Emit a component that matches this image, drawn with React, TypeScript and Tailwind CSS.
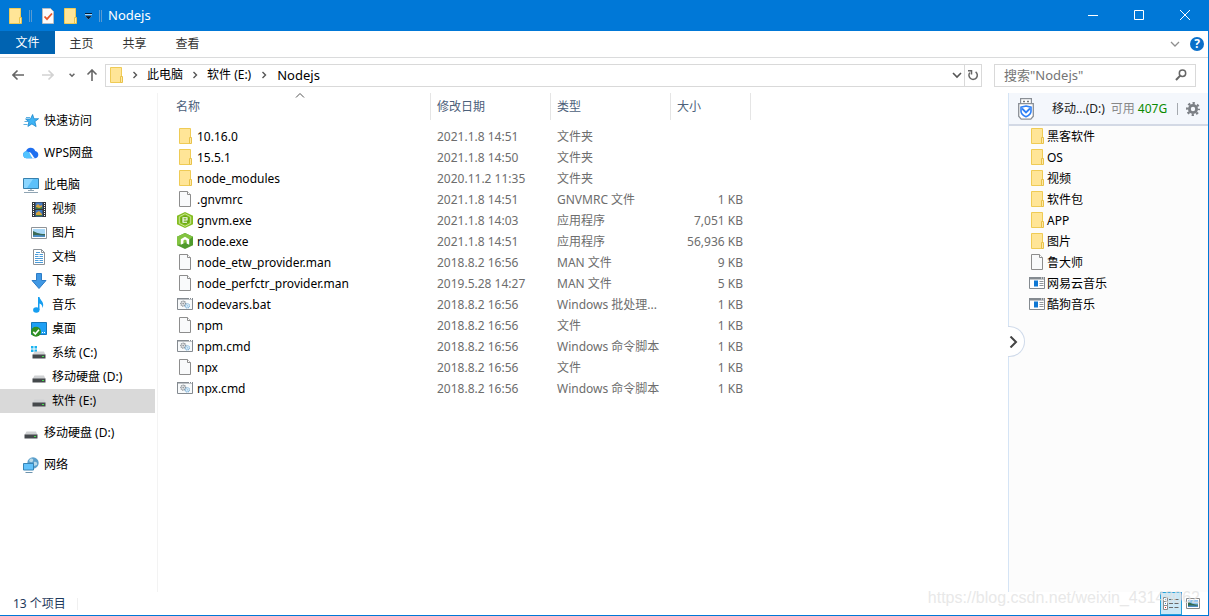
import type { ReactNode } from "react";

type IconName =
  | "folder" | "file" | "script" | "gnvm" | "node" | "app" | "star" | "cloud" | "pc" | "video"
  | "picture" | "doc" | "download" | "music" | "desktop" | "system" | "drive" | "network";

const drawings: Record<IconName, ReactNode> = {
  folder: (
    <>
      <path d="M2.5.5h11v15h-11z" fill="#ffe597" stroke="#efcb55" />
      <path d="M12.5 9.5h2v6h-2z" fill="#ffe9a6" stroke="#e8c24a" />
    </>
  ),
  file: (
    <>
      <path d="M2.5.5h8l3 3v12h-11z" fill="#f9fafb" stroke="#8d8d8d" />
      <path d="M10.5.5v3h3" fill="#fff" stroke="#8d8d8d" />
    </>
  ),
  script: (
    <>
      <path d="M.5 2.500h15v11H.5z" fill="#f8fafb" stroke="#848a90" />
      <path d="M0 2h16v1.500H0z" fill="#848a90" />
      <path d="M12 2.500h1M14 2.500h1" stroke="#fff" />
      <circle cx="6.200" cy="7.600" r="2.400" fill="#e4e6e8" stroke="#8b9096" strokeWidth="1.300" strokeDasharray="1.100 .5" />
      <circle cx="6.200" cy="7.600" r=".8" fill="#8b9096" />
      <circle cx="10.300" cy="9.800" r="2.100" fill="#e3f2fb" stroke="#7fb2d8" strokeWidth="1.200" strokeDasharray="1 .5" />
      <circle cx="10.300" cy="9.800" r=".6" fill="#6aa5d0" />
    </>
  ),
  gnvm: (
    <>
      <path d="M8 0l8 3.800v8.400L8 16 0 12.200V3.800z" fill="#84bd22" />
      <path d="M8 1.800l5.700 3v6.500L8 14.300l-5.700-3V4.800z" fill="none" stroke="#d9efb0" strokeWidth=".8" />
      <path d="M8 3.600l4.200 2.200v4.400L8 12.400l-4.200-2.200V5.800z" fill="#69a814" />
      <path d="M6 8h4V5.800H6v4.400h4" fill="none" stroke="#fff" strokeWidth="1.100" />
    </>
  ),
  node: (
    <>
      <path d="M8 0l8 3.800v8.400L8 16 0 12.200V3.800z" fill="#4f9a2c" />
      <path d="M8 0l8 3.800L8 10 0 12.200V3.800z" fill="#83c341" />
      <path d="M3.800 11.800V6.200L8 3.800l4.200 2.400v5.600l-2.600-1.300V7.400L8 6.500l-1.600.9v3.100z" fill="#fff" />
    </>
  ),
  app: (
    <>
      <path d="M.5 2.500h15v11H.5z" fill="#fff" stroke="#848a90" />
      <path d="M0 2h16v2.500H0z" fill="#848a90" />
      <path d="M12 3h1M14 3h1" stroke="#fff" />
      <path d="M5 5.500h4v6H5z" fill="#0f78d4" />
      <path d="M10.500 6.500h4M10.500 8.500h4M10.500 10.500h4" stroke="#8f959a" />
    </>
  ),
  star: (
    <>
      <path d="M9.600 1.500l1.400 4.300 4.600-.1-3.700 2.900 1.200 5-4.200-2.700-4 2.500 1-4.700L2.600 6h4.900z" fill="#3fb4f5" stroke="#1b86cc" strokeWidth=".8" />
      <path d="M3 4.500h4M1.500 8.500h3.500M.5 11.500h4" stroke="#4ba6dc" strokeWidth=".9" />
    </>
  ),
  cloud: (
    <>
      <path d="M3.600 13.300A3.600 3.600 0 0 1 3 6.200a4.900 4.900 0 0 1 9.200-.3 3.800 3.800 0 0 1 .3 7.400z" fill="#1e6ff0" />
      <path d="M3.600 13.300A3.600 3.600 0 0 1 3 6.200C6 6 7.500 9 9 13.300z" fill="#52c4ff" />
      <path d="M5.800 7c3 0 4 5.300 6.500 6.300H9.600C8 12 7.500 9 5.800 7z" fill="#fff" />
    </>
  ),
  pc: (
    <>
      <path d="M.5 1.500h15v10H.5z" fill="#5cc0fa" stroke="#3780ad" />
      <path d="M1 2h9L4 11H1z" fill="#8bd6ff" />
      <path d="M5 13.500h6M1 15.500h14" stroke="#8fa4b3" />
      <path d="M7 12h2v1H7z" fill="#b5c3cd" />
    </>
  ),
  video: (
    <>
      <path d="M1 1h14v15H1z" fill="#33373b" />
      <path d="M4.500 1.500h7v6.500h-7z" fill="#497ec7" />
      <path d="M4.500 9h7v6.500h-7z" fill="#3f78bf" />
      <path d="M5 5l2-2 2 2 2-1v3H5zM5 12l3-2 3 3v1H5z" fill="#d9a53d" />
      <path d="M5 6l3 1 3-1v2H5zM5 14h6v1H5z" fill="#3b7a45" />
      <path d="M2.500 2v13M13.500 2v13" stroke="#fff" strokeDasharray="1 1" />
    </>
  ),
  picture: (
    <>
      <path d="M.5 2.500h15v11H.5z" fill="#fff" stroke="#8f9499" />
      <path d="M2 4h12v8H2z" fill="#a9d8f7" />
      <path d="M2 6c3 1 5 3 12 3v3H2z" fill="#3c6b58" />
      <path d="M2 10.500c4-1 8 0 12 0V12H2z" fill="#4d8ec6" />
    </>
  ),
  doc: (
    <>
      <path d="M2.500.5h8l3 3v12h-11z" fill="#fff" stroke="#8d9297" />
      <path d="M10.500.5v3h3" fill="none" stroke="#8d9297" />
      <path d="M4 5.500h3.500M8.500 5.500H12M4 7.500h3.500M8.500 7.500H12M4 9.500h8M4 11.500h3.500M8.500 11.500H12M4 13.500h8M5 3.500h4" stroke="#4b9bd8" />
    </>
  ),
  download: <path d="M5.500.5h5v7h4.500L8 15.500 1 7.500h4.500z" fill="#4098e4" stroke="#2c7cc7" />,
  music: (
    <>
      <path d="M7 0h1.500c.5 3.500 5.500 5 3 11-.2-3-1.500-4-3-4.500V13H7z" fill="#169ef0" />
      <ellipse cx="5.300" cy="13" rx="3.200" ry="2.700" fill="#169ef0" />
    </>
  ),
  desktop: (
    <>
      <path d="M.5 1.500h15v12H.5z" fill="#1ea0f5" stroke="#1576b9" />
      <path d="M11 11.500h1M13 11.500h1" stroke="#fff" />
      <circle cx="5" cy="10.800" r="5" fill="#2f8f22" />
      <path d="M2.300 10.900l2 2.100 3.700-4.200" fill="none" stroke="#fff" strokeWidth="1.600" />
    </>
  ),
  system: (
    <>
      <path d="M0 1h2.500v2.500H0zM3.500 1H6v2.500H3.500zM0 4.500h2.500V7H0zM3.500 4.500H6V7H3.500z" fill="#1bb3f0" />
      <path d="M3.500 6.500h9.500l1.500 3.500h-13z" fill="#d3d5d7" />
      <path d="M1.500 9.500h13v4h-13z" fill="#45494c" />
      <path d="M11 11.500h2" stroke="#43e04b" />
    </>
  ),
  drive: (
    <>
      <path d="M3.500 6.500h9.500l1.500 3.500h-13z" fill="#cfd1d3" />
      <path d="M1.500 9.500h13v4h-13z" fill="#45494c" />
      <path d="M11 11.500h2" stroke="#43e04b" />
    </>
  ),
  network: (
    <>
      <circle cx="10" cy="6" r="5.700" fill="#5b9fcb" />
      <path d="M7 2c2-1 4 0 3 2S7 5 6 4zM11 5c2-1 4 1 3 3l-3 1z" fill="#b9d9e8" />
      <path d="M.5 6.500h10v6.500H.5z" fill="#62c2fb" stroke="#3884b4" />
      <path d="M2.500 15.500h7" stroke="#6d93ad" />
    </>
  ),
};

function Icon({ name }: { name: IconName }) {
  return (
    <svg className="size-4 shrink-0" viewBox="0 0 16 16" aria-hidden="true">
      {drawings[name]}
    </svg>
  );
}

function Chevron({ d, className }: { d: string; className: string }) {
  return (
    <svg className={className} viewBox="0 0 10 10" fill="none" stroke="currentColor" aria-hidden="true">
      <path d={d} />
    </svg>
  );
}

const DOWN = "M1 3l4 4 4-4";
const RIGHT = "M3.500 2l3 3-3 3";

const places: { label: string; icon: IconName; children?: { label: string; icon: IconName }[] }[] = [
  { label: "快速访问", icon: "star" },
  { label: "WPS网盘", icon: "cloud" },
  {
    label: "此电脑",
    icon: "pc",
    children: [
      { label: "视频", icon: "video" },
      { label: "图片", icon: "picture" },
      { label: "文档", icon: "doc" },
      { label: "下载", icon: "download" },
      { label: "音乐", icon: "music" },
      { label: "桌面", icon: "desktop" },
      { label: "系统 (C:)", icon: "system" },
      { label: "移动硬盘 (D:)", icon: "drive" },
      { label: "软件 (E:)", icon: "drive" },
    ],
  },
  { label: "移动硬盘 (D:)", icon: "drive" },
  { label: "网络", icon: "network" },
];

const files: [IconName, string, string, string, string][] = [
  ["folder", "10.16.0", "2021.1.8 14:51", "文件夹", ""],
  ["folder", "15.5.1", "2021.1.8 14:50", "文件夹", ""],
  ["folder", "node_modules", "2020.11.2 11:35", "文件夹", ""],
  ["file", ".gnvmrc", "2021.1.8 14:51", "GNVMRC 文件", "1 KB"],
  ["gnvm", "gnvm.exe", "2021.1.8 14:03", "应用程序", "7,051 KB"],
  ["node", "node.exe", "2021.1.8 14:51", "应用程序", "56,936 KB"],
  ["file", "node_etw_provider.man", "2018.8.2 16:56", "MAN 文件", "9 KB"],
  ["file", "node_perfctr_provider.man", "2019.5.28 14:27", "MAN 文件", "5 KB"],
  ["script", "nodevars.bat", "2018.8.2 16:56", "Windows 批处理...", "1 KB"],
  ["file", "npm", "2018.8.2 16:56", "文件", "1 KB"],
  ["script", "npm.cmd", "2018.8.2 16:56", "Windows 命令脚本", "1 KB"],
  ["file", "npx", "2018.8.2 16:56", "文件", "1 KB"],
  ["script", "npx.cmd", "2018.8.2 16:56", "Windows 命令脚本", "1 KB"],
];

const usbItems: [IconName, string][] = [
  ["folder", "黑客软件"],
  ["folder", "OS"],
  ["folder", "视频"],
  ["folder", "软件包"],
  ["folder", "APP"],
  ["folder", "图片"],
  ["file", "鲁大师"],
  ["app", "网易云音乐"],
  ["app", "酷狗音乐"],
];

function TitleBar() {
  return (
    <header className="flex h-[31px] shrink-0 items-center bg-[#0078d7] pl-[7px] text-white">
      <Icon name="folder" />
      <span className="ml-[6px] h-3 w-[3px] border-x border-[#5b9bd0]" />
      <button aria-label="属性" className="ml-2">
        <svg className="size-4" viewBox="0 0 16 16" aria-hidden="true">
          <path d="M2.500.5h8l3 3v12h-11z" fill="#fbfbfb" stroke="#b9bcc0" />
          <path d="M4.500 8.500l2.500 2.700 5-5.700" fill="none" stroke="#e8562a" strokeWidth="1.800" />
        </svg>
      </button>
      <button aria-label="新建文件夹" className="ml-[6px]">
        <Icon name="folder" />
      </button>
      <button aria-label="自定义快速访问工具栏" className="ml-[6px]">
        <svg className="h-2 w-[9px]" viewBox="0 0 9 8" aria-hidden="true">
          <path d="M1 1.500h7" stroke="#001a33" />
          <path d="M1 2.500h7" stroke="#fff" strokeOpacity=".7" />
          <path d="M1 4h7L4.500 7.500z" fill="#001a33" stroke="#fff" strokeOpacity=".4" strokeWidth=".5" />
        </svg>
      </button>
      <span className="ml-[6px] h-3 w-[3px] border-x border-[#5b9bd0]" />
      <h1 className="ml-[6px] pb-px text-[13px]">Nodejs</h1>
      <div className="ml-auto flex self-stretch">
        {[
          ["最小化", "M0 5.500h10"],
          ["最大化", "M.5.5h9v9h-9z"],
          ["关闭", "M0 0l10 10M10 0L0 10"],
        ].map(([label, d]) => (
          <button key={label} aria-label={label} className="flex w-[46px] items-center justify-center pb-px">
            <svg className="size-[10px]" viewBox="0 0 10 10" fill="none" stroke="#fff" aria-hidden="true">
              <path d={d} />
            </svg>
          </button>
        ))}
      </div>
    </header>
  );
}

function Ribbon() {
  return (
    <nav className="flex h-[27px] shrink-0 items-start border-b border-[#dadbdc] text-[#333]">
      <button className="h-[23px] w-[55px] bg-[#0063b1] text-white">文件</button>
      {["主页", "共享", "查看"].map((tab) => (
        <button key={tab} className="h-[26px] w-[53px]">
          {tab}
        </button>
      ))}
      <div className="ml-auto flex h-[26px] items-center gap-[10px] pr-1">
        <button aria-label="展开功能区">
          <Chevron d={DOWN} className="size-[10px] stroke-[1.3] text-[#8f8f8f]" />
        </button>
        <button
          aria-label="帮助"
          className="flex size-[14px] items-center justify-center rounded-full bg-[#0a6fc9] text-[12px] font-bold text-white"
        >
          ?
        </button>
      </div>
    </nav>
  );
}

function AddressRow() {
  return (
    <div className="flex h-[35px] shrink-0 items-center pr-3 pb-px">
      <div className="flex w-[105px] items-center pl-3 text-[#666]">
        <button aria-label="后退">
          <svg className="size-3" viewBox="0 0 12 12" fill="none" stroke="#666" strokeWidth="1.600" aria-hidden="true">
            <path d="M12 6H1M5.500 1.500L1 6l4.500 4.500" />
          </svg>
        </button>
        <button aria-label="前进" className="ml-[18px]">
          <svg className="size-3" viewBox="0 0 12 12" fill="none" stroke="#d2d2d2" strokeWidth="1.600" aria-hidden="true">
            <path d="M0 6h11M6.500 1.500L11 6l-4.500 4.500" />
          </svg>
        </button>
        <button aria-label="最近浏览的位置" className="ml-[14px]">
          <Chevron d="M2 3.500l3 3 3-3" className="size-2 stroke-2" />
        </button>
        <button aria-label="上移" className="ml-[10px]">
          <svg className="size-3" viewBox="0 0 12 12" fill="none" stroke="#666" strokeWidth="1.600" aria-hidden="true">
            <path d="M6 12V1M1.500 5.500L6 1l4.500 4.500" />
          </svg>
        </button>
      </div>
      <div className="flex h-[23px] flex-1 items-center border border-[#d9d9d9] pl-[2px] text-black">
        <div className="flex items-center pb-px">
          <Icon name="folder" />
          <Chevron d={RIGHT} className="ml-[6px] size-[10px] stroke-[1.4] text-[#555]" />
          <a href="#pc" className="ml-[7px]">此电脑</a>
          <Chevron d={RIGHT} className="mx-[7px] size-[10px] stroke-[1.4] text-[#555]" />
          <a href="#e" className="whitespace-nowrap">软件 (E:)</a>
          <Chevron d={RIGHT} className="mx-2 size-[10px] stroke-[1.4] text-[#555]" />
          <a href="#nodejs" className="text-[13px]">Nodejs</a>
        </div>
        <button aria-label="以前的位置" className="mr-[2px] ml-auto">
          <Chevron d={DOWN} className="size-[10px] stroke-[1.6] text-[#555]" />
        </button>
        <button aria-label="刷新" className="flex h-full w-[17px] items-center justify-center border-l border-[#d9d9d9]">
          <svg className="size-3" viewBox="0 0 12 12" fill="none" stroke="#666" strokeWidth="1.500" aria-hidden="true">
            <path d="M8.600 2.800A4.200 4.200 0 1 1 2.800 3.600" />
            <path d="M1 1.700h3.500v3.700" />
          </svg>
        </button>
      </div>
      <label className="ml-3 flex h-[23px] w-[202px] items-center border border-[#d9d9d9] pr-2 pl-[9px]">
        <input
          type="search"
          aria-label="搜索"
          placeholder={'搜索"Nodejs"'}
          className="min-w-0 flex-1 pb-px text-[13px] outline-none placeholder:text-[#757575]"
        />
        <svg className="size-3" viewBox="0 0 12 12" fill="none" stroke="#666" aria-hidden="true">
          <circle cx="7.500" cy="4.300" r="3.200" strokeWidth="1.500" />
          <path d="M5.200 6.600L1 11" strokeWidth="2" />
        </svg>
      </label>
    </div>
  );
}

function Sidebar() {
  return (
    <nav className="w-[158px] shrink-0 border-r border-[#f3f3f3] pt-4 text-black">
      <ul className="flex flex-col gap-2">
        {places.map((place) => (
          <li key={place.label}>
            <a href="#place" className="flex h-6 items-center gap-[5px] pl-[23px]">
              <Icon name={place.icon} />
              {place.label}
            </a>
            {place.children && (
              <ul>
                {place.children.map((child) => (
                  <li key={child.label} className={child.label === "软件 (E:)" ? "mr-[2px] bg-[#d9d9d9]" : ""}>
                    <a href="#place" className="flex h-6 items-center gap-[5px] pl-[31px]">
                      <Icon name={child.icon} />
                      {child.label}
                    </a>
                  </li>
                ))}
              </ul>
            )}
          </li>
        ))}
      </ul>
    </nav>
  );
}

function FileTable() {
  return (
    <main className="relative min-w-0 flex-1">
      <table className="w-[593px] table-fixed border-separate border-spacing-0 text-left text-[#6d6d6d]">
        <colgroup>
          <col className="w-[273px]" />
          <col className="w-[120px]" />
          <col className="w-[120px]" />
          <col className="w-[80px]" />
        </colgroup>
        <thead className="text-[#4c607a]">
          <tr className="h-[27px]">
            <th className="border-r border-[#e5e5e5] p-0 pl-[18px] font-normal">名称</th>
            <th className="border-r border-[#e5e5e5] p-0 pl-[6px] font-normal">修改日期</th>
            <th className="border-r border-[#e5e5e5] p-0 pl-[6px] font-normal">类型</th>
            <th className="border-r border-[#e5e5e5] p-0 pl-[6px] font-normal">大小</th>
          </tr>
        </thead>
        <tbody className="before:block before:h-[6px]">
          {files.map(([icon, name, date, kind, size]) => (
            <tr key={name} className="h-[21px] whitespace-nowrap">
              <td className="p-0 pl-[19px] text-black">
                <span className="flex h-[21px] items-center gap-1 [&>svg]:mb-px">
                  <Icon name={icon} />
                  {name}
                </span>
              </td>
              <td className="p-0 pl-[6px]">{date}</td>
              <td className="p-0 pl-[6px]">{kind}</td>
              <td className="p-0 pr-2 text-right">{size}</td>
            </tr>
          ))}
        </tbody>
      </table>
      <Chevron d="M1 6.500l4-4 4 4" className="absolute -top-[2px] left-[137px] size-[10px] text-[#555]" />
    </main>
  );
}

function UsbPanel() {
  return (
    <aside className="relative w-[200px] shrink-0 border-l border-[#d5e4f5] bg-[#fcfcfc] text-black">
      <div className="flex h-[33px] items-center border-b-2 border-[#d3d9e5] bg-[#f4f7fc] pr-2 pl-[9px]">
        <svg className="h-[22px] w-4 shrink-0" viewBox="0 0 16 22" aria-hidden="true">
          <path d="M2.600.6h10.800v6H2.600z" fill="#fff" stroke="#8a8f96" strokeWidth="1.200" />
          <path d="M5 3.500h2M9 3.500h2" stroke="#777" strokeWidth="1.500" />
          <path d="M.7 5.700h14.600v12.500l-2.500 3H3.200l-2.500-3z" fill="#fff" stroke="#8a8f96" strokeWidth="1.300" />
          <path d="M8 8l5 1.200v4c0 2.800-2.400 4.400-5 5.500-2.600-1.100-5-2.700-5-5.500v-4z" fill="#fff" stroke="#2f80f5" strokeWidth="1.600" />
          <path d="M4 10.500L8 14.500l4-4" fill="none" stroke="#2f80f5" strokeWidth="1.800" />
        </svg>
        <span className="ml-[18px] whitespace-nowrap text-[#222]">移动...(D:)</span>
        <span className="ml-[6px] whitespace-nowrap text-[#888]">可用</span>
        <span className="ml-[3px] text-[#0b8a00]">407G</span>
        <span className="ml-auto h-3 w-px bg-[#a5a9af]" />
        <button aria-label="设置" className="ml-2">
          <svg className="size-[14px]" viewBox="0 0 14 14" fill="none" stroke="#7b7f85" aria-hidden="true">
            <circle cx="7" cy="7" r="3.600" strokeWidth="2.800" />
            <circle cx="7" cy="7" r="5.900" strokeWidth="2.200" strokeDasharray="2.300 2.333" strokeDashoffset="1.150" />
          </svg>
        </button>
      </div>
      <ul>
        {usbItems.map(([icon, label]) => (
          <li key={label}>
            <a href="#usb" className="flex h-[21px] items-center gap-[2px] pl-5 [&>svg]:mb-px">
              <Icon name={icon} />
              {label}
            </a>
          </li>
        ))}
      </ul>
      <button
        aria-label="收起面板"
        className="absolute top-[233px] -left-px flex h-[31px] w-[17px] items-center rounded-r-full border border-l-0 border-[#cfdaea] bg-white"
      >
        <svg className="h-3 w-[10px]" viewBox="0 0 10 12" fill="none" stroke="#444" strokeWidth="2" aria-hidden="true">
          <path d="M2.500 0.500L8 6l-5.500 5.500" />
        </svg>
      </button>
    </aside>
  );
}

function StatusBar() {
  return (
    <footer className="relative flex h-[23px] shrink-0 items-center pr-[5px] pl-[13px] text-[#1e395b]">
      <span>13 个项目</span>
      <span className="ml-[11px] h-3 w-px bg-[#f0f0f0]" />
      <button
        aria-label="详细信息"
        className="ml-auto flex h-[23px] w-[22px] items-center justify-center border border-[#26a0da] bg-[#cbe8f6]"
      >
        <svg className="size-4" viewBox="0 0 16 16" fill="none" aria-hidden="true">
          <path d="M.5 1.500h4v4h-4zM.5 5.500h4v4h-4zM.5 9.500h4v4h-4z" fill="#fff" stroke="#8b8b8b" />
          <path d="M2 3.500h1M2 7.500h1" stroke="#3a78c0" />
          <path d="M2 11.500h1" stroke="#e02020" />
          <path d="M6 3.500h4M11.500 3.500h4M6 7.500h4M11.500 7.500h4M6 11.500h4M11.500 11.500h4" stroke="#6a6a6a" />
        </svg>
      </button>
      <button aria-label="大缩略图" className="flex h-[23px] w-[21px] items-center justify-center">
        <svg className="h-[11px] w-[14px]" viewBox="0 0 14 11" aria-hidden="true">
          <path d="M.5.5h13v10H.5z" fill="#fff" stroke="#8a8a8a" />
          <path d="M2 2h10v7H2z" fill="#8cc3f0" />
          <path d="M2 4c3 1 5 2.500 10 2.500V9H2z" fill="#356a4e" />
          <path d="M2 8c3-1 6 0 10-.5V9H2z" fill="#4d8ec6" />
        </svg>
      </button>
      <span className="pointer-events-none absolute top-[-6px] right-2 font-['Liberation_Sans'] text-base leading-6 whitespace-nowrap text-[#e2e2e2]/80">
        https://blog.csdn.net/weixin_43148062
      </span>
    </footer>
  );
}

export default function App() {
  return (
    <div className="flex min-h-screen flex-col border-r border-b border-[#0078d7] bg-white font-['Noto_Sans','Noto_Sans_CJK_SC',sans-serif] text-[12px] leading-4">
      <TitleBar />
      <Ribbon />
      <AddressRow />
      <div className="flex flex-1">
        <Sidebar />
        <FileTable />
        <UsbPanel />
      </div>
      <StatusBar />
    </div>
  );
}
